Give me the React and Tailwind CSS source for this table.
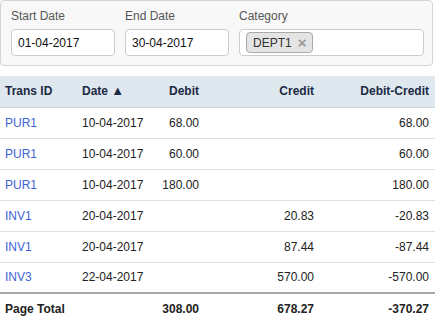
import React from 'react';

const rows = [
  { id: 'PUR1', date: '10-04-2017', debit: '68.00', credit: '', diff: '68.00' },
  { id: 'PUR1', date: '10-04-2017', debit: '60.00', credit: '', diff: '60.00' },
  { id: 'PUR1', date: '10-04-2017', debit: '180.00', credit: '', diff: '180.00' },
  { id: 'INV1', date: '20-04-2017', debit: '', credit: '20.83', diff: '-20.83' },
  { id: 'INV1', date: '20-04-2017', debit: '', credit: '87.44', diff: '-87.44' },
  { id: 'INV3', date: '22-04-2017', debit: '', credit: '570.00', diff: '-570.00' },
];

const Field = ({ label, children, className }) => (
  <div className={className}>
    <div className="h-[28px] pt-[8px] text-[12px] leading-[14px] text-[#555]">{label}</div>
    {children}
  </div>
);

const App = () => {
  return (
    <div className="w-[435px] h-[324px] overflow-hidden bg-white font-['Liberation_Sans',Arial,sans-serif] text-[12px] text-[#222]">
      {/* filters */}
      <div className="w-[433px] h-[66px] border border-[#d4d4d4] rounded-[4px] bg-[#f8f8f8] pl-[10px] flex gap-[10px]">
        <Field label="Start Date" className="w-[104px]">
          <div className="h-[27px] border border-[#ccc] rounded-[4px] bg-white px-[6px] flex items-center text-[12px] text-[#111]">
            01-04-2017
          </div>
        </Field>
        <Field label="End Date" className="w-[104px]">
          <div className="h-[27px] border border-[#ccc] rounded-[4px] bg-white px-[6px] flex items-center text-[12px] text-[#111]">
            30-04-2017
          </div>
        </Field>
        <Field label="Category" className="w-[185px]">
          <div className="h-[27px] border border-[#ccc] rounded-[4px] bg-white px-[6px] flex items-center">
            <span className="h-[21px] px-[6px] border border-[#aaa] rounded-[4px] bg-[#e4e4e4] flex items-center gap-[6px] text-[12px] text-[#333]">
              DEPT1
              <span className="text-[15px] leading-none font-bold text-[#999]">×</span>
            </span>
          </div>
        </Field>
      </div>

      {/* table */}
      <table className="mt-[10px] w-[435px] table-fixed border-collapse">
        <colgroup>
          <col className="w-[77px]" />
          <col className="w-[73px]" />
          <col className="w-[55px]" />
          <col className="w-[115px]" />
          <col className="w-[115px]" />
        </colgroup>
        <thead>
          <tr className="h-[31px] bg-[#dfe8ee] border-b border-[#c9d7df] text-[#1b2a45] font-bold">
            <th className="pl-[5px] text-left font-bold">Trans ID</th>
            <th className="pl-[5px] text-left font-bold">
              Date <span className="text-[13px] leading-none">▲</span>
            </th>
            <th className="pr-[6px] text-right font-bold">Debit</th>
            <th className="pr-[6px] text-right font-bold">Credit</th>
            <th className="pr-[6px] text-right font-bold">Debit-Credit</th>
          </tr>
        </thead>
        <tbody>
          {rows.map((r, i) => (
            <tr key={i} className="h-[31px] border-b border-[#dedede]">
              <td className="pl-[5px] text-[#3d63d6]">{r.id}</td>
              <td className="pl-[5px]">{r.date}</td>
              <td className="pr-[6px] text-right">{r.debit}</td>
              <td className="pr-[6px] text-right">{r.credit}</td>
              <td className="pr-[6px] text-right">{r.diff}</td>
            </tr>
          ))}
          <tr className="h-[31px] border-t-2 border-t-[#a8a8a8] border-b border-b-[#bbb] font-bold">
            <td colSpan={2} className="pl-[5px]">Page Total</td>
            <td className="pr-[6px] text-right">308.00</td>
            <td className="pr-[6px] text-right">678.27</td>
            <td className="pr-[6px] text-right">-370.27</td>
          </tr>
        </tbody>
      </table>
    </div>
  );
};

export default App;
